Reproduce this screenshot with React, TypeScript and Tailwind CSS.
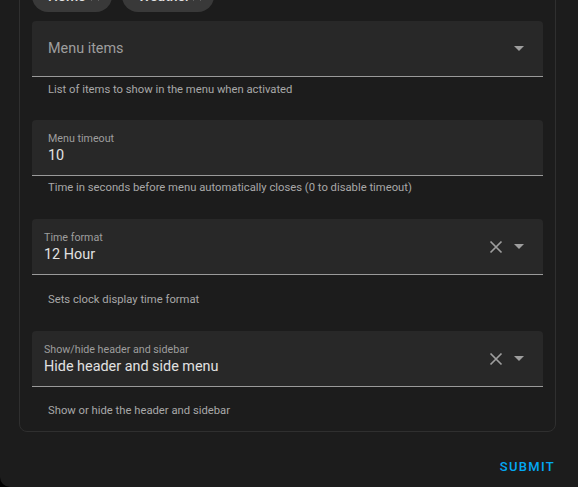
import React from 'react';

const FONT = { fontFamily: 'Roboto, "Noto Sans", sans-serif' };

function Caret() {
  return (
    <svg width="10" height="5" viewBox="0 0 10 5" className="shrink-0">
      <path d="M0 0 L10 0 L5 5 Z" fill="#9e9e9e" />
    </svg>
  );
}

function ClearIcon() {
  return (
    <svg width="14" height="14" viewBox="0 0 14 14" className="shrink-0">
      <path d="M1.5 1.5 L12.5 12.5 M12.5 1.5 L1.5 12.5" stroke="#9e9e9e" strokeWidth="1.7" />
    </svg>
  );
}

function Chip({ label, width }: { label: string; width: string }) {
  return (
    <div className={`flex h-8 items-center justify-between rounded-full bg-[#393939] pl-4 pr-3 text-sm font-medium text-[#e1e1e1] ${width}`}>
      <span>{label}</span>
      <svg width="10" height="10" viewBox="0 0 10 10">
        <path d="M1 1 L9 9 M9 1 L1 9" stroke="#cfcfcf" strokeWidth="1.5" />
      </svg>
    </div>
  );
}

interface FieldProps {
  label: string;
  value?: string;
  clearable?: boolean;
  caret?: boolean;
  pad: string;
}

function Field({ label, value, clearable, caret, pad }: FieldProps) {
  return (
    <div className={`flex h-14 items-center rounded-t-[4px] border-b border-[#9a9a9a] bg-[#282828] pr-[19px] ${pad}`}>
      <div className="flex flex-1 flex-col">
        {value ? (
          <>
            <span className="text-[10.7px] leading-4 text-[#9e9e9e]">{label}</span>
            <span className="text-[14.4px] leading-[18px] text-[#e1e1e1]">{value}</span>
          </>
        ) : (
          <span className="text-[14.4px] text-[#9e9e9e]">{label}</span>
        )}
      </div>
      {clearable && (
        <div className="mr-[11px] flex items-center">
          <ClearIcon />
        </div>
      )}
      {caret && <Caret />}
    </div>
  );
}

function Helper({ text, mt }: { text: string; mt: string }) {
  return <p className={`pl-4 text-[11.25px] leading-4 text-[#a8a8a8] ${mt}`}>{text}</p>;
}

export default function App() {
  return (
    <div className="bg-black" style={FONT}>
      <div className="h-[487px] overflow-hidden rounded-bl-[10px] bg-[#1c1c1c] pl-[19px] pr-[22px]">
        <div className="-mt-[33px] rounded-b-[8px] border border-[#2f2f2f] px-3 pb-3 pt-3">
          <div className="flex gap-[10px]">
            <Chip label="Home" width="w-[80px]" />
            <Chip label="Weather" width="w-[92px]" />
          </div>

          <div className="mt-[9px]">
            <Field label="Menu items" caret pad="pl-4" />
            <Helper text="List of items to show in the menu when activated" mt="mt-[5px]" />
          </div>

          <div className="mt-[22px]">
            <Field label="Menu timeout" value="10" pad="pl-4" />
            <Helper text="Time in seconds before menu automatically closes (0 to disable timeout)" mt="mt-[4px]" />
          </div>

          <div className="mt-[23px]">
            <Field label="Time format" value="12 Hour" clearable caret pad="pl-3" />
            <Helper text="Sets clock display time format" mt="mt-[17px]" />
          </div>

          <div className="mt-[23px]">
            <Field label="Show/hide header and sidebar" value="Hide header and side menu" clearable caret pad="pl-3" />
            <Helper text="Show or hide the header and sidebar" mt="mt-[16px]" />
          </div>
        </div>

        <div className="mt-[25px] flex justify-end pr-[1px]">
          <span className="text-[13px] font-medium tracking-[0.1em] text-[#03a9f4]">SUBMIT</span>
        </div>
      </div>
    </div>
  );
}
